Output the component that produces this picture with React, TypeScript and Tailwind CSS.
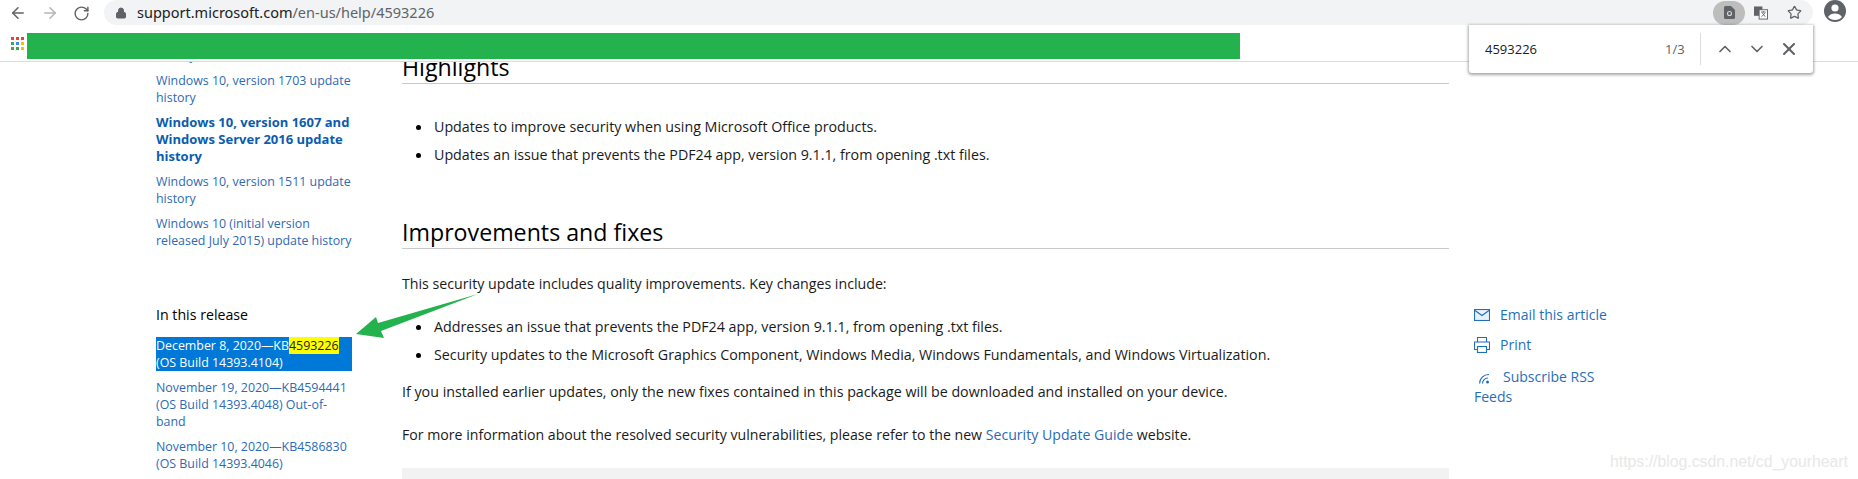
import * as React from 'react';
import { ArrowLeft, ArrowRight, RotateCw, Lock, Star, ChevronUp, ChevronDown, X } from 'lucide-react';

const FONT = 'font-["Open_Sans","Noto_Sans",sans-serif]';

function AppsGrid(): React.ReactElement {
  const colors = ['#ea4335', '#ea4335', '#ea4335', '#34a853', '#4285f4', '#fbbc05', '#34a853', '#34a853', '#fbbc05'];
  return (
    <div className="grid w-[13px] grid-cols-3 gap-[2px]">
      {colors.map((c, i) => (
        <span key={i} className="h-[3px] w-[3px]" style={{ backgroundColor: c }} />
      ))}
    </div>
  );
}

function SideLink({ children }: { children: React.ReactNode }): React.ReactElement {
  return <a className="mb-2 block whitespace-nowrap text-[#2d6ab5]">{children}</a>;
}

function Heading({ children, className }: { children: React.ReactNode; className?: string }): React.ReactElement {
  return (
    <h2 className={`border-b border-[#c8c8c8] text-[23.2px] leading-[31px] font-medium text-black ${className ?? ''}`}>
      {children}
    </h2>
  );
}

function Bullet({ children }: { children: React.ReactNode }): React.ReactElement {
  return (
    <li className="flex h-[28px] items-center text-[14.25px] text-[#1a1a1a]">
      <span className="mr-[13px] ml-[14px] h-[5px] w-[5px] rounded-full bg-black" />
      {children}
    </li>
  );
}

export default function App(): React.ReactElement {
  return (
    <div className={`relative h-[479px] w-[1858px] overflow-hidden bg-white ${FONT}`}>
      {/* Browser toolbar */}
      <div className="flex h-[26px] items-center">
        <div className="flex w-[104px] items-center gap-[14px] pl-[9px] text-[#5f6368]">
          <ArrowLeft size={18} strokeWidth={2} />
          <ArrowRight size={18} strokeWidth={2} className="text-[#b4b6b9]" />
          <RotateCw size={17} strokeWidth={2} />
        </div>
        <div className="flex h-[25px] w-[1709px] items-center self-start rounded-[13px] bg-[#f1f3f4] pl-[11px] text-[#202124]">
          <Lock size={12} className="mr-[10px] fill-[#5f6368] text-[#5f6368]" />
          <span className="font-['Noto_Sans'] text-[14.5px]">
            support.microsoft.com<span className="text-[#5f6368]">/en-us/help/4593226</span>
          </span>
          <div className="ml-auto flex items-center">
            <span className="flex h-[24px] w-[32px] items-center justify-center rounded-full bg-[#bdbdbd]">
              <svg width="11" height="13" viewBox="0 0 11 13">
                <path d="M0 1.500A1.500 1.500 0 0 1 1.500 0H7l4 4v7.500a1.500 1.500 0 0 1-1.500 1.500h-8A1.500 1.500 0 0 1 0 11.500z" fill="#5f6368" />
                <circle cx="5.500" cy="7.500" r="2" fill="none" stroke="#d8d8d8" strokeWidth="1.100" />
              </svg>
            </span>
            <span className="mx-[9px] flex h-[14px] w-[14px] items-center justify-center">
              <svg width="15" height="14" viewBox="0 0 15 14">
                <rect x="0" y="0" width="9" height="10" fill="#5f6368" />
                <rect x="5.500" y="3.500" width="9" height="10" fill="#fff" stroke="#5f6368" />
                <path d="M7.500 6h5M10 5v1M8 11l4-4M9 7l3 4" stroke="#5f6368" fill="none" />
              </svg>
            </span>
            <Star size={15} strokeWidth={2} className="mr-[11px] ml-[10px] text-[#5f6368]" />
          </div>
        </div>
        <div className="ml-[11px] flex h-[22px] w-[22px] items-center justify-center self-start overflow-hidden rounded-full bg-[#5f6368]">
          <svg width="22" height="22" viewBox="0 0 22 22">
            <circle cx="11" cy="8" r="3.600" fill="#fff" />
            <path d="M4 17c1.500-2.600 4.400-3.600 7-3.600s5.500 1 7 3.600c-1.600 2-4.200 3-7 3s-5.400-1-7-3z" fill="#fff" />
          </svg>
        </div>
      </div>

      {/* Bookmarks bar, covered by a green rectangle in the screenshot */}
      <div className="flex h-[36px] items-start border-b border-[#dcdcdc] pt-[7px]">
        <div className="mt-[4px] ml-[11px] w-[16px]">
          <AppsGrid />
        </div>
        <div className="h-[26px] w-[1213px] bg-[#24b24f]" />
      </div>

      {/* Page */}
      <div className="flex h-[417px] overflow-hidden">
        {/* Left navigation */}
        <aside className="ml-[156px] w-[196px] shrink-0 text-[12.4px] leading-[17px]">
          <div className="-mt-[15px]">
            <SideLink>history</SideLink>
            <SideLink>
              Windows 10, version 1703 update
              <br />
              history
            </SideLink>
            <a className="mb-2 block text-[13px] font-bold whitespace-nowrap text-[#0b5cad]">
              Windows 10, version 1607 and
              <br />
              Windows Server 2016 update
              <br />
              history
            </a>
            <SideLink>
              Windows 10, version 1511 update
              <br />
              history
            </SideLink>
            <SideLink>
              Windows 10 (initial version
              <br />
              released July 2015) update history
            </SideLink>
          </div>
          <h3 className="mt-[57px] mb-[14px] text-[14.2px] font-medium text-black">In this release</h3>
          <a className="mb-2 block bg-[#0078d7] whitespace-nowrap text-white">
            December 8, 2020—KB<mark className="bg-[#ffff00] text-[#222]">4593226</mark>
            <br />
            (OS Build 14393.4104)
          </a>
          <SideLink>
            November 19, 2020—KB4594441
            <br />
            (OS Build 14393.4048) Out-of-
            <br />
            band
          </SideLink>
          <SideLink>
            November 10, 2020—KB4586830
            <br />
            (OS Build 14393.4046)
          </SideLink>
        </aside>

        {/* Article */}
        <main className="ml-[50px] w-[1047px] shrink-0">
          <Heading className="-mt-[10px]">Highlights</Heading>
          <ul className="mt-[29px]">
            <Bullet>Updates to improve security when using Microsoft Office products.</Bullet>
            <Bullet>Updates an issue that prevents the PDF24 app, version 9.1.1, from opening .txt files.</Bullet>
          </ul>
          <Heading className="mt-[48px]">Improvements and fixes</Heading>
          <p className="mt-[25px] text-[14.2px] leading-[20px] text-[#1a1a1a]">
            This security update includes quality improvements. Key changes include:
          </p>
          <ul className="mt-[19px]">
            <Bullet>Addresses an issue that prevents the PDF24 app, version 9.1.1, from opening .txt files.</Bullet>
            <Bullet>
              Security updates to the Microsoft Graphics Component, Windows Media, Windows Fundamentals, and Windows
              Virtualization.
            </Bullet>
          </ul>
          <p className="mt-[13px] text-[14.25px] leading-[20px] text-[#1a1a1a]">
            If you installed earlier updates, only the new fixes contained in this package will be downloaded and
            installed on your device.
          </p>
          <p className="mt-[23px] text-[14.14px] leading-[20px] text-[#1a1a1a]">
            For more information about the resolved security vulnerabilities, please refer to the new{' '}
            <a className="text-[#2d6ab5]">Security Update Guide</a> website.
          </p>
          <div className="mt-[23px] h-[40px] bg-[#f2f2f2]" />
        </main>

        {/* Right actions */}
        <aside className="ml-[25px] w-[160px] shrink-0 pt-[243px] text-[14px] leading-[20px] text-[#1f6fbb]">
          <a className="flex items-center gap-[10px]">
            <svg width="16" height="12" viewBox="0 0 16 12" fill="none" stroke="#1f6fbb" strokeWidth="1.100">
              <rect x="0.500" y="0.500" width="15" height="11" fill="#e8f1fa" />
              <path d="M1 1.500l7 5 7-5" />
            </svg>
            Email this article
          </a>
          <a className="mt-[10px] flex items-center gap-[10px]">
            <svg width="16" height="16" viewBox="0 0 16 16" fill="none" stroke="#1f6fbb" strokeWidth="1.100">
              <path d="M3.500 5V0.500h9V5" />
              <path d="M3.500 12.500H0.500V5h15v7.500h-3" />
              <rect x="3.500" y="9.500" width="9" height="6" />
            </svg>
            Print
          </a>
          <a className="mt-[12px] block">
            <svg className="mr-[13px] ml-[5px] inline-block" width="11" height="11" viewBox="0 0 11 11" fill="none" stroke="#1f6fbb" strokeWidth="1.200">
              <path d="M.6 10.500C.6 5.500 4.500 1.500 10 1.500M3.500 10.500C3.500 7.500 6 5 9 5" />
              <circle cx="8.500" cy="9" r="1.500" fill="#1f6fbb" stroke="none" />
            </svg>
            Subscribe RSS
            <br />
            Feeds
          </a>
        </aside>
      </div>

      {/* Find in page popup */}
      <div className="absolute top-[25px] left-[1469px] flex h-[48px] w-[344px] items-center rounded-b-[3px] bg-white pl-[16px] text-[13px] text-[#202124] shadow-[0_1px_3px_1px_rgba(60,64,67,0.45)]">
        <span className="w-[180px] pt-[1px]">4593226</span>
        <span className="w-[35px] pt-[1px] text-[#5f6368]">1/3</span>
        <span className="h-[32px] w-px bg-[#dadce0]" />
        <div className="ml-[14px] flex items-center gap-[12px] text-[#5f6368]">
          <ChevronUp size={20} />
          <ChevronDown size={20} />
          <X size={20} strokeWidth={2.5} />
        </div>
      </div>

      {/* Annotation arrow */}
      <svg className="absolute top-[290px] left-[350px]" width="135" height="55" viewBox="0 0 135 55">
        <path d="M6 44 L26 27 L28 33 L128 4 L31 41 L34 48 Z" fill="#24b24f" />
      </svg>

      {/* Watermark */}
      <span className="absolute top-[452px] left-[1610px] font-['Liberation_Sans'] text-[15.8px] leading-[20px] whitespace-nowrap text-[#e8e8e8]">
        https://blog.csdn.net/cd_yourheart
      </span>
    </div>
  );
}
